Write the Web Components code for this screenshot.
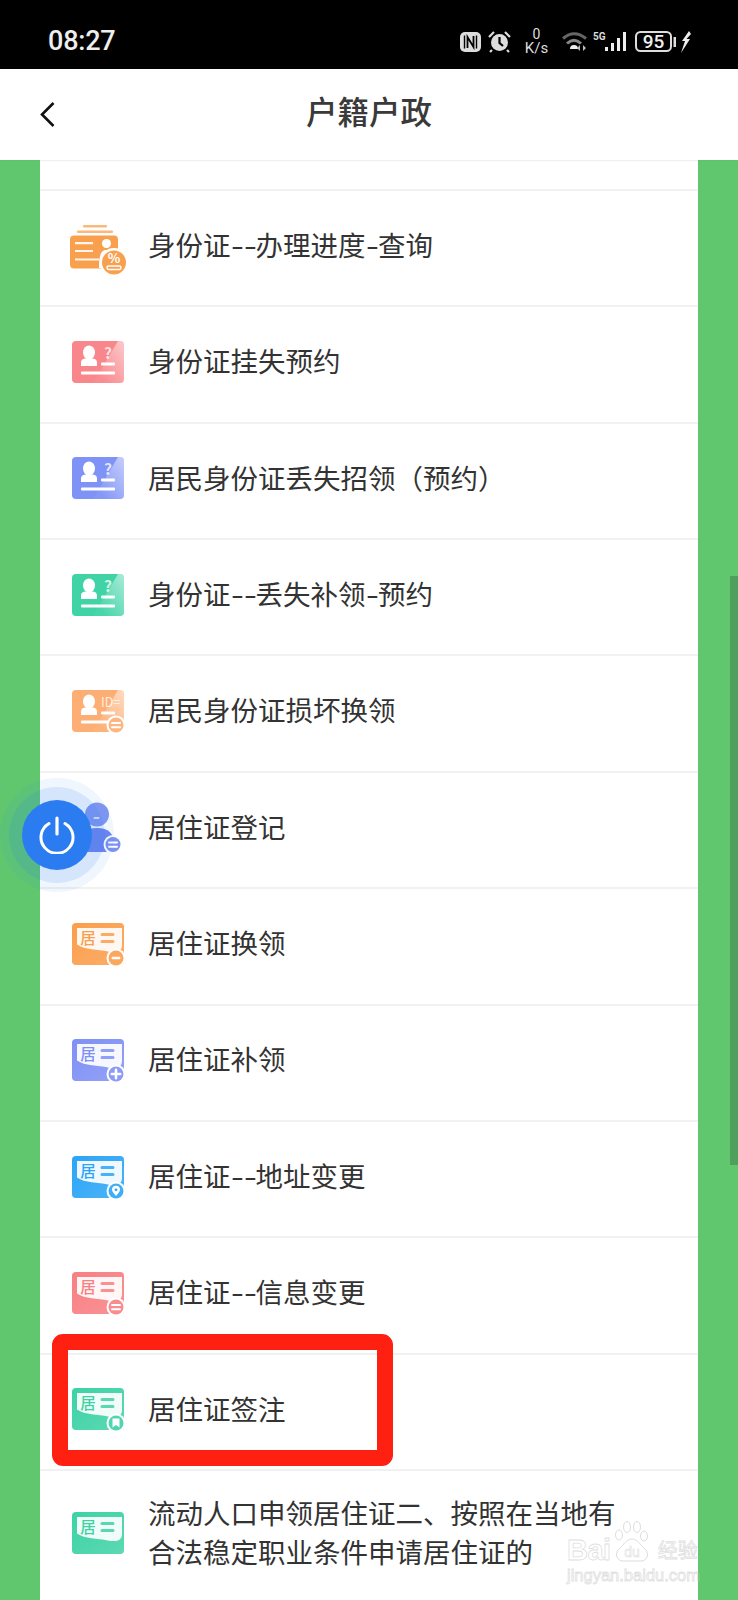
<!DOCTYPE html>
<html lang="zh">
<head>
<meta charset="utf-8">
<title>户籍户政</title>
<style>
  html, body { margin: 0; padding: 0; background: #60c76f; }
  body { width: 738px; height: 1600px; overflow: hidden; font-family: "Noto Sans CJK SC", "Noto Sans", sans-serif; }
  .dash { display: inline-block; width: 12.500px; transform: scaleX(1.35); transform-origin: left center; white-space: nowrap; }
  .dash.two { width: 25px; }
  .ln { display: block; white-space: nowrap; }
</style>
</head>
<body>
<app-page>
  <status-bar slot="status"></status-bar>
  <nav-header slot="nav">户籍户政</nav-header>
  <service-list slot="list">
    <div style="height:28px"></div>
    <service-row><cert-icon slot="icon" kind="stack" color="#f9a04f"></cert-icon>身份证<span class="dash two">--</span>办理进度<span class="dash">-</span>查询</service-row>
    <service-row><cert-icon slot="icon" kind="person" color="#f8868b"></cert-icon>身份证挂失预约</service-row>
    <service-row><cert-icon slot="icon" kind="person" color="#7f93f6"></cert-icon>居民身份证丢失招领（预约）</service-row>
    <service-row><cert-icon slot="icon" kind="person" color="#3fd3a6"></cert-icon>身份证<span class="dash two">--</span>丢失补领<span class="dash">-</span>预约</service-row>
    <service-row><cert-icon slot="icon" kind="idcard" color="#fdae74" badge="equal"></cert-icon>居民身份证损坏换领</service-row>
    <service-row><cert-icon slot="icon" kind="user" color="#6f85ee" badge="equal"></cert-icon>居住证登记</service-row>
    <service-row><cert-icon slot="icon" kind="resident" color="#fb9e4c" badge="minus"></cert-icon>居住证换领</service-row>
    <service-row><cert-icon slot="icon" kind="resident" color="#7f90f5" badge="plus"></cert-icon>居住证补领</service-row>
    <service-row><cert-icon slot="icon" kind="resident" color="#2ba5f6" badge="pin"></cert-icon>居住证<span class="dash two">--</span>地址变更</service-row>
    <service-row><cert-icon slot="icon" kind="resident" color="#f87f82" badge="equal"></cert-icon>居住证<span class="dash two">--</span>信息变更</service-row>
    <service-row><cert-icon slot="icon" kind="resident" color="#3dd2a5" badge="mark"></cert-icon>居住证签注</service-row>
    <service-row tall><cert-icon slot="icon" kind="resident" color="#3dd2a5"></cert-icon><span class="ln">流动人口申领居住证二、按照在当地有</span><span class="ln">合法稳定职业条件申请居住证的</span></service-row>
  </service-list>
  <float-power slot="over"></float-power>
  <mark-box slot="over"></mark-box>
  <baidu-mark slot="over"></baidu-mark>
</app-page>

<script>
class AppPage extends HTMLElement {
  constructor() {
    super();
    this.attachShadow({ mode: 'open' });
    this.shadowRoot.innerHTML = `
      <style>
        :host { display: block; position: relative; width: 738px; height: 1600px; overflow: hidden; background: #60c76f; }
        .content { padding: 0 40px 0 40px; }
        .scroll { position: absolute; right: 0; top: 576px; width: 8px; height: 589px; background: #4f9f5d; }
      </style>
      <slot name="status"></slot>
      <slot name="nav"></slot>
      <div class="content"><slot name="list"></slot></div>
      <div class="scroll"></div>
      <slot name="over"></slot>
    `;
  }
}

class StatusBar extends HTMLElement {
  constructor() {
    super();
    this.attachShadow({ mode: 'open' });
    this.shadowRoot.innerHTML = `
      <style>
        :host { display: flex; align-items: center; justify-content: space-between; box-sizing: border-box; height: 69px; padding: 14px 47px 0 48px; background: #000; color: #eee; }
        .time { font: 500 27px/1 Roboto, sans-serif; letter-spacing: -.2px; }
        .icons { display: flex; align-items: center; }
        svg { display: block; overflow: visible; }
        .speed { display: flex; flex-direction: column; align-items: center; width: 25px; margin: 0 13px; font-family: Roboto, sans-serif; color: #ddd; }
        .speed b { font-weight: 400; font-size: 14px; line-height: 13px; }
        .speed i { font-style: normal; font-size: 15px; line-height: 14px; }
      </style>
      <div class="time">08:27</div>
      <div class="icons">
        <svg width="21" height="20" viewBox="0 0 21 20" style="margin-right:7px">
          <rect width="21" height="20" rx="5" fill="#ddd"/>
          <path d="M4.500 3.500V16.500M16.500 3.500V16.500" stroke="#000" stroke-width="1.400"/>
          <path d="M7.500 16V5l6 10V4" fill="none" stroke="#000" stroke-width="1.800"/>
        </svg>
        <svg width="23" height="21" viewBox="0 0 23 21">
          <circle cx="11.500" cy="11.500" r="8.500" fill="#ddd"/>
          <path d="M11.500 6v6l3.500 3" fill="none" stroke="#000" stroke-width="2.200"/>
          <path d="M1 6l5-5M22 6l-5-5M4 19l-2 2M19 19l2 2" stroke="#ddd" stroke-width="2.200"/>
        </svg>
        <div class="speed"><b>0</b><i>K/s</i></div>
        <svg width="25" height="20" viewBox="0 0 25 20" style="margin-right:6px">
          <path d="M1 6.500Q12 -3 24 6.500" fill="none" stroke="#666" stroke-width="3"/>
          <path d="M5 11.500Q12 5 19 11.500" fill="none" stroke="#888" stroke-width="3"/>
          <path d="M8 17a4 4 0 0 1 8 0z" fill="#eee"/>
          <path d="M18 13v6l-3-3zM21 13v6l3-3z" fill="#bbb"/>
        </svg>
        <svg width="34" height="20" viewBox="0 0 34 20" style="margin-right:8px">
          <text x="0" y="8" font-family="Roboto, sans-serif" font-size="10" font-weight="700" fill="#ddd">5G</text>
          <rect x="12" y="15" width="3" height="4" fill="#eee"/>
          <rect x="18" y="11" width="3" height="8" fill="#eee"/>
          <rect x="24" y="6" width="3" height="13" fill="#eee"/>
          <rect x="30" y="0" width="3" height="19" fill="#eee"/>
        </svg>
        <svg width="41" height="21" viewBox="0 0 41 21" style="margin-right:5px">
          <rect x="1" y="1" width="35" height="19" rx="4.500" fill="none" stroke="#ddd" stroke-width="2"/>
          <text x="18.500" y="16.500" text-anchor="middle" font-family="Roboto, sans-serif" font-size="19" font-weight="500" fill="#eee">95</text>
          <rect x="38.500" y="6" width="2.500" height="10" fill="#ddd"/>
        </svg>
        <svg width="10" height="22" viewBox="0 0 10 22">
          <path d="M8 0L1 10h3L0 22l9-14H5.500L10 3z" fill="#eee"/>
        </svg>
      </div>
    `;
  }
}

class NavHeader extends HTMLElement {
  constructor() {
    super();
    this.attachShadow({ mode: 'open' });
    this.shadowRoot.innerHTML = `
      <style>
        :host { display: flex; align-items: center; justify-content: center; position: relative; box-sizing: border-box; height: 91px; padding-bottom: 9px; background: #fff; color: #3a3a3a; font-size: 31.500px; font-weight: 500; box-shadow: 0 1px 2px rgba(0,0,0,.03); z-index: 1; }
        svg { position: absolute; left: 40px; top: 33px; }
      </style>
      <svg width="15" height="25" viewBox="0 0 15 25"><path d="M13.500 1L2 12.500 13.500 24" fill="none" stroke="#111" stroke-width="2.600"/></svg>
      <slot></slot>
    `;
  }
}

class ServiceList extends HTMLElement {
  constructor() {
    super();
    this.attachShadow({ mode: 'open' });
    this.shadowRoot.innerHTML = `
      <style>
        :host { display: block; box-sizing: border-box; height: 1440px; background: #fff; border-top: 1px solid #f4f4f4; }
      </style>
      <slot></slot>
    `;
  }
}

class ServiceRow extends HTMLElement {
  constructor() {
    super();
    this.attachShadow({ mode: 'open' });
    this.shadowRoot.innerHTML = `
      <style>
        :host { display: flex; align-items: center; gap: 24px; box-sizing: border-box; height: 116.36px; padding: 0 70px 4px 32px; border-top: 2px solid #f1f1f1; background: #fff; color: #333; font-size: 27.500px; line-height: 38.500px; }
        :host([tall]) { height: 130px; padding-bottom: 2px; }
        .text { flex: 1; min-width: 0; margin-top: -4px; }
      </style>
      <slot name="icon"></slot>
      <div class="text"><slot></slot></div>
    `;
  }
}

// badge glyphs drawn around (0,0)
const BADGE = {
  minus: '<rect x="-4.500" y="-1.300" width="9" height="2.600" rx="1.300" fill="#fff"/>',
  plus: '<path d="M-4.200 0H4.200M0 -4.200V4.200" stroke="#fff" stroke-width="2.600" stroke-linecap="round"/>',
  equal: '<path d="M-4 -2H4M-4 2.200H4" stroke="#fff" stroke-width="2" stroke-linecap="round"/>',
  pin: '<path d="M0 5C-3 1.500 -4 0 -4 -1.200a4 4 0 0 1 8 0C4 0 3 1.500 0 5z" fill="#fff"/><circle cy="-1.200" r="1.400" fill="currentColor"/>',
  mark: '<path d="M-3.500 -4.500H3.500V4.500L0 2 -3.500 4.500z" fill="#fff"/>'
};

function badgeSvg(type, x, y, color) {
  if (!BADGE[type]) return '';
  return `<circle cx="${x}" cy="${y}" r="9.500" fill="#fff"/>
    <circle cx="${x}" cy="${y}" r="7.500" fill="${color}" opacity=".9"/>
    <g transform="translate(${x} ${y})" color="${color}">${BADGE[type]}</g>`;
}

class CertIcon extends HTMLElement {
  connectedCallback() {
    if (this.shadowRoot) return;
    this.attachShadow({ mode: 'open' });
    const kind = this.getAttribute('kind');
    const color = this.getAttribute('color');
    const badge = this.getAttribute('badge');
    this.shadowRoot.innerHTML = `
      <style>
        :host { display: block; flex: none; width: 52px; height: 43px; }
        svg { display: block; overflow: visible; }
        text { font-family: "Noto Sans CJK SC", "Liberation Sans", sans-serif; }
      </style>
      <svg width="52" height="43" viewBox="0 0 52 43">
        <defs>
          <linearGradient id="shine" x1="1" y1="0" x2="0" y2="1">
            <stop offset="0" stop-color="#fff" stop-opacity=".55"/>
            <stop offset=".8" stop-color="#fff" stop-opacity=".05"/>
          </linearGradient>
          <linearGradient id="soft" x1="0" y1="0" x2="1" y2="1">
            <stop offset="0" stop-color="#fff" stop-opacity="0"/>
            <stop offset="1" stop-color="#fff" stop-opacity=".16"/>
          </linearGradient>
        </defs>
        ${this.art(kind, color, badge)}
      </svg>
    `;
  }

  art(kind, color, badge) {
    if (kind === 'stack') {
      return `
        <rect x="11" y="0" width="24" height="2.500" rx="1" fill="${color}" opacity=".75"/>
        <rect x="5" y="5.500" width="36" height="2.500" rx="1" fill="${color}" opacity=".75"/>
        <rect x="-2" y="10.500" width="48" height="33" rx="4" fill="${color}"/>
        <path d="M3 18.200H21M3 26H21M3 34.500H27" stroke="#fff" stroke-width="2.200" opacity=".9"/>
        <circle cx="34.500" cy="18.500" r="4.500" fill="#fff"/>
        <path d="M27 43C27 30 29 25 34.500 25S43 30 43 43z" fill="#fff"/>
        <circle cx="42" cy="37.500" r="14.500" fill="#fff"/>
        <circle cx="42" cy="37.500" r="12" fill="${color}"/>
        <text x="42" y="38" text-anchor="middle" font-size="13" font-weight="700" fill="#fff">%</text>
        <rect x="35" y="41" width="14" height="3.500" rx="1.700" fill="none" stroke="#fff" stroke-width="1.400"/>`;
    }
    if (kind === 'user') {
      return `
        <circle cx="25" cy="8.500" r="12" fill="${color}" opacity=".85"/>
        <rect x="21.500" y="11" width="6" height="2" rx="1" fill="#fff" opacity=".8"/>
        <path d="M8 46V38Q8 22 25 22T42 38V46z" fill="${color}"/>
        ${badgeSvg(badge, 41, 38.500, color)}`;
    }
    if (kind === 'resident') {
      return `
        <rect width="52" height="42" rx="4" fill="${color}"/>
        <rect width="52" height="42" rx="4" fill="url(#soft)"/>
        <path d="M5 5H50V22C50 29 44 30 36 28.500 26 26.500 13 27 5 21.500z" fill="#fff" opacity=".92"/>
        <text x="16" y="21" text-anchor="middle" font-size="15.500" font-weight="500" fill="${color}">居</text>
        <path d="M30 11.500H41M30 18.500H41" stroke="${color}" stroke-width="3" stroke-linecap="round" opacity=".85"/>
        ${badgeSvg(badge, 44, 35, color)}`;
    }
    // person and idcard share the same card
    const corner = kind === 'idcard'
      ? '<text x="29" y="17" font-size="12.500" fill="#fff" font-family="Liberation Sans" opacity=".8">ID=</text>'
      : '<text x="36" y="17.500" text-anchor="middle" font-size="15.500" font-weight="700" fill="#fff" opacity=".75">?</text>';
    return `
      <rect width="52" height="42" rx="4" fill="${color}"/>
      <path d="M46 0H48a4 4 0 0 1 4 4V38a4 4 0 0 1-4 4H21z" fill="url(#shine)"/>
      <ellipse cx="17" cy="11.500" rx="6" ry="7" fill="#fff"/>
      <path d="M9 25V21.500Q9 18 13 17.500H21Q25 18 25 21.500V25z" fill="#fff"/>
      <rect x="29" y="21.500" width="14" height="3" rx="1" fill="#fff"/>
      <rect x="9" y="30.500" width="34" height="3" rx="1" fill="#fff"/>
      ${badgeSvg(badge, 44, 35, color)}
      ${corner}`;
  }
}

class FloatPower extends HTMLElement {
  constructor() {
    super();
    this.attachShadow({ mode: 'open' });
    this.shadowRoot.innerHTML = `
      <style>
        :host { display: block; position: absolute; left: 0; top: 778px; width: 114px; height: 114px; border-radius: 50%; background: rgba(43,124,240,.07); }
        .mid { position: absolute; left: 9px; top: 9px; width: 96px; height: 96px; border-radius: 50%; background: rgba(43,124,240,.14); }
        .btn { position: absolute; left: 22px; top: 22px; width: 70px; height: 70px; border-radius: 50%; background: #2b7cf0; display: flex; align-items: center; justify-content: center; }
      </style>
      <div class="mid"></div>
      <div class="btn">
        <svg width="38" height="38" viewBox="0 0 38 38">
          <path d="M11 7.500A16 16 0 1 0 27 7.500" fill="none" stroke="#fff" stroke-width="3" stroke-linecap="round"/>
          <path d="M19 2V18" stroke="#fff" stroke-width="3.200" stroke-linecap="round"/>
        </svg>
      </div>
    `;
  }
}

class MarkBox extends HTMLElement {
  constructor() {
    super();
    this.attachShadow({ mode: 'open' });
    this.shadowRoot.innerHTML = `
      <style>
        :host { display: block; position: absolute; left: 52px; top: 1334px; box-sizing: border-box; width: 341px; height: 132px; border: 16px solid #fe2112; border-radius: 11px; }
      </style>
    `;
  }
}

class BaiduMark extends HTMLElement {
  constructor() {
    super();
    this.attachShadow({ mode: 'open' });
    this.shadowRoot.innerHTML = `
      <style>
        :host { display: block; position: absolute; left: 567px; top: 1520px; width: 134px; height: 66px; color: transparent; -webkit-text-stroke: .8px rgba(190,190,190,.5); font-family: "Liberation Sans", sans-serif; }
        .logo { display: flex; align-items: flex-end; height: 42px; }
        .bai { font: bold 29px/24px "Liberation Sans", sans-serif; letter-spacing: -.5px; }
        .paw { flex: none; width: 38px; height: 42px; margin: 0 0 0 2px; }
        .jy { font: 20px/24px "Noto Sans CJK SC", sans-serif; margin-left: 7px; white-space: nowrap; }
        .url { font-size: 16.500px; line-height: 20px; margin-top: 3px; white-space: nowrap; }
      </style>
      <div class="logo">
        <span class="bai">Bai</span>
        <svg class="paw" viewBox="0 0 38 42" fill="none" stroke="rgba(190,190,190,.5)" stroke-width="1">
          <ellipse cx="6" cy="15" rx="3.500" ry="5"/>
          <ellipse cx="14" cy="7" rx="3.500" ry="5.500"/>
          <ellipse cx="24" cy="7" rx="3.500" ry="5.500"/>
          <ellipse cx="31" cy="16" rx="3.500" ry="5"/>
          <path d="M19 19C13 19 11 25 6 29 1 34 4 41 10 41H28C34 41 37 34 32 29 27 25 25 19 19 19z"/>
          <text x="19" y="37" text-anchor="middle" font-size="14" font-family="Liberation Sans" stroke-width=".6">du</text>
        </svg>
        <span class="jy">经验</span>
      </div>
      <div class="url">jingyan.baidu.com</div>
    `;
  }
}

customElements.define('app-page', AppPage);
customElements.define('status-bar', StatusBar);
customElements.define('nav-header', NavHeader);
customElements.define('service-list', ServiceList);
customElements.define('service-row', ServiceRow);
customElements.define('cert-icon', CertIcon);
customElements.define('float-power', FloatPower);
customElements.define('mark-box', MarkBox);
customElements.define('baidu-mark', BaiduMark);
</script>
</body>
</html>
